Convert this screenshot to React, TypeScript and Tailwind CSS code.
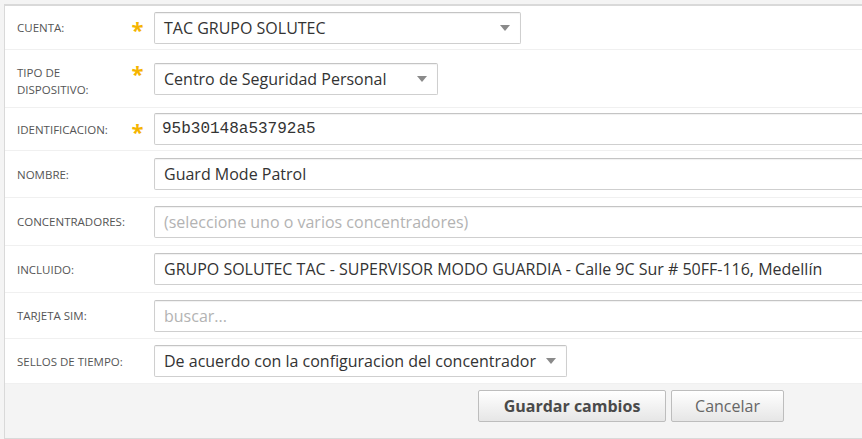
type Row = {
  label: string[];
  required?: boolean;
  height: string;
  kind: 'select' | 'input' | 'mono' | 'placeholder';
  value: string;
  width?: string;
};

const rows: Row[] = [
  { label: ['Cuenta:'], required: true, height: 'h-[44px]', kind: 'select', value: 'TAC GRUPO SOLUTEC', width: 'w-[367px]' },
  { label: ['Tipo de', 'dispositivo:'], required: true, height: 'h-[58px]', kind: 'select', value: 'Centro de Seguridad Personal', width: 'w-[284px]' },
  { label: ['Identificacion:'], required: true, height: 'h-[43px]', kind: 'mono', value: '95b30148a53792a5' },
  { label: ['Nombre:'], height: 'h-[47px]', kind: 'input', value: 'Guard Mode Patrol' },
  { label: ['Concentradores:'], height: 'h-[48px]', kind: 'placeholder', value: '(seleccione uno o varios concentradores)' },
  { label: ['Incluido:'], height: 'h-[47px]', kind: 'input', value: 'GRUPO SOLUTEC TAC - SUPERVISOR MODO GUARDIA - Calle 9C Sur # 50FF-116, Medellín' },
  { label: ['Tarjeta SIM:'], height: 'h-[46px]', kind: 'placeholder', value: 'buscar...' },
  { label: ['Sellos de tiempo:'], height: 'h-[45px]', kind: 'select', value: 'De acuerdo con la configuracion del concentrador', width: 'w-[413px]' },
];

function Arrow() {
  return (
    <svg width="10" height="6" viewBox="0 0 10 6" className="shrink-0">
      <path d="M0 0h10L5 6z" fill="#8a8a8a" />
    </svg>
  );
}

function Field({ row }: { row: Row }) {
  const base =
    'h-[32px] border border-[#cfcfcf] border-t-[#c4c4c4] rounded-[2px] bg-white flex items-center shadow-[inset_0_1px_1px_rgba(0,0,0,0.06)] text-[16px] whitespace-nowrap overflow-hidden';
  if (row.kind === 'select') {
    return (
      <div className={`${base} ${row.width} pl-[9px] pr-[10px] justify-between text-[#333]`}>
        <span>{row.value}</span>
        <Arrow />
      </div>
    );
  }
  if (row.kind === 'mono') {
    return (
      <div className={`${base} w-[800px] pl-[7px] text-[#333] [font-family:'Liberation_Mono',monospace]`}>
        {row.value}
      </div>
    );
  }
  return (
    <div className={`${base} w-[800px] pl-[9px] ${row.kind === 'placeholder' ? 'text-[#b3b3b3]' : 'text-[#333]'}`}>
      {row.value}
    </div>
  );
}

export default function App() {
  return (
    <div className="w-[862px] h-[439px] overflow-hidden bg-[#f4f4f4] pt-[4px] pl-[4px] [font-family:'Open_Sans',sans-serif]">
      <div className="w-[1000px] bg-white border-t-2 border-l border-[#d9d9d9] border-b">
        {rows.map(row => (
          <div key={row.label.join()} className={`flex items-center border-b border-[#f0f0f0] ${row.height}`}>
            <div
              className={`w-[116px] pl-[12px] text-[11.5px] leading-[17px] uppercase text-[#555] whitespace-nowrap ${
                row.label.length > 1 ? 'mt-[5px]' : ''
              }`}
            >
              {row.label.map(l => (
                <div key={l}>{l}</div>
              ))}
            </div>
            <div className="w-[33px] self-stretch flex justify-center pt-[7px]">
              {row.required && (
                <span className="text-[#f5b400] text-[22px] font-bold leading-[28px] mt-[2px]">*</span>
              )}
            </div>
            <Field row={row} />
          </div>
        ))}
        <div className="h-[54px] bg-[#f4f4f4] flex items-start gap-[5px] pl-[473px] pt-[6px]">
          <button className="h-[32px] w-[188px] border border-[#bdbdbd] rounded-[2px] bg-gradient-to-b from-white to-[#e6e6e6] text-[16px] font-bold text-[#4a4a4a]">
            Guardar cambios
          </button>
          <button className="h-[32px] w-[113px] border border-[#bdbdbd] rounded-[2px] bg-gradient-to-b from-white to-[#e6e6e6] text-[16px] text-[#666]">
            Cancelar
          </button>
        </div>
      </div>
    </div>
  );
}
